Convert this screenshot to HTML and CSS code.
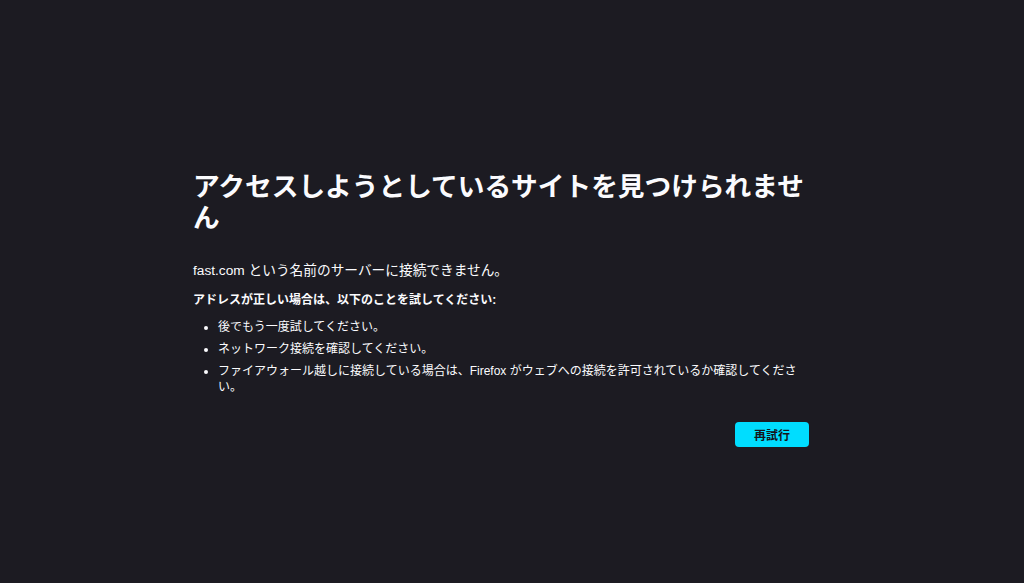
FILE: index.html
```html
<!DOCTYPE html>
<html lang="ja">
<head>
<meta charset="utf-8">
<title>サーバーが見つかりませんでした</title>
<link rel="stylesheet" href="styles.css">
</head>
<body>
<main class="container">
  <h1 class="title">アクセスしようとしているサイトを見つけられません</h1>
  <p class="desc">fast.com という名前のサーバーに接続できません。</p>
  <p class="hint">アドレスが正しい場合は、以下のことを試してください:</p>
  <ul class="tips">
    <li>後でもう一度試してください。</li>
    <li>ネットワーク接続を確認してください。</li>
    <li>ファイアウォール越しに接続している場合は、Firefox がウェブへの接続を許可されているか確認してください。</li>
  </ul>
  <div class="actions">
    <button class="retry" type="button">再試行</button>
  </div>
</main>
</body>
</html>
```
FILE: styles.css
```css
html, body {
  margin: 0;
  background: #1c1b22;
  color: #fbfbfe;
  font-family: "Liberation Sans", "Noto Sans CJK JP", sans-serif;
}

.container {
  width: 616px;
  margin-left: 193px;
  padding-top: 172px;
}

.title {
  margin: 0;
  font-size: 26.7px;
  line-height: 31px;
  font-weight: 700;
}

.desc {
  margin: 28px 0 0;
  font-size: 13.7px;
  line-height: 18px;
}

.hint {
  margin: 12px 0 0;
  font-size: 12px;
  line-height: 16px;
  font-weight: 700;
}

.tips {
  margin: 12px 0 0;
  padding-left: 25px;
  font-size: 12px;
  line-height: 15.5px;
}

.tips li + li {
  margin-top: 6.5px;
}

.actions {
  display: flex;
  justify-content: flex-end;
  margin-top: 27px;
}

.retry {
  width: 74px;
  height: 25px;
  border: none;
  border-radius: 4px;
  background: #00ddff;
  color: #15141a;
  font-family: "Liberation Sans", "Noto Sans CJK JP", sans-serif;
  font-size: 12px;
  font-weight: 700;
  padding: 0;
}
```
